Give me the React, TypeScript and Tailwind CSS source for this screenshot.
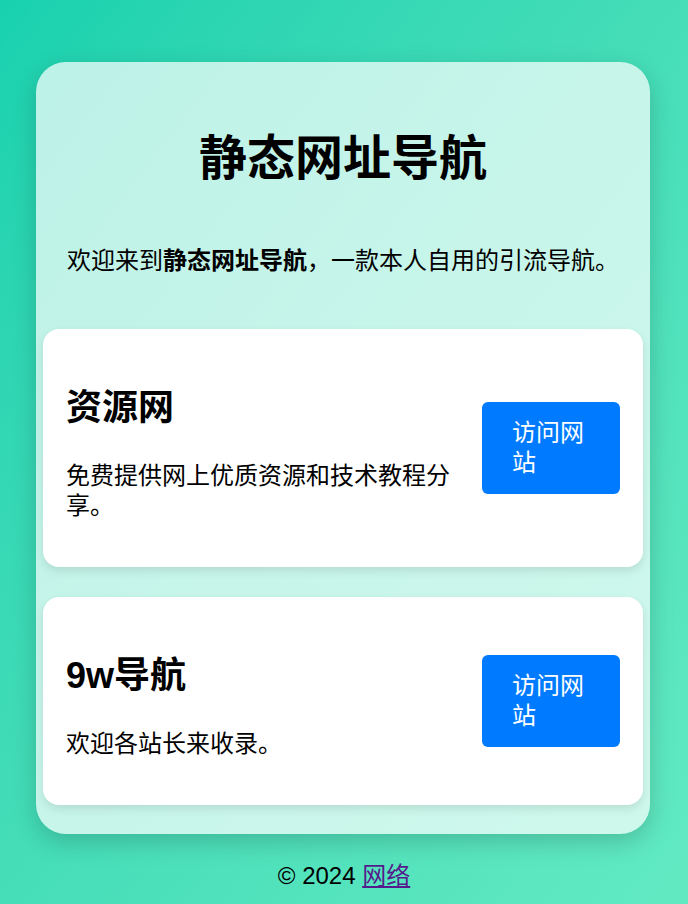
import React from "react";

const FONT = { fontFamily: '"Liberation Sans", "Noto Sans CJK SC", sans-serif' };

function Card({ title, desc }: { title: string; desc: string }) {
  return (
    <div className="flex items-center justify-between rounded-[16px] bg-white px-[23px] py-[24px] shadow-[0_4px_10px_rgba(0,0,0,0.1)]">
      <div className="flex-1 pr-[24px]">
        <h2 className="mt-[33px] text-[36px] font-bold leading-[43px] text-black">{title}</h2>
        <p className="mb-[22px] mt-[32px] text-[24px] leading-[30px] text-black">{desc}</p>
      </div>
      <a
        href="#"
        className="w-[138px] shrink-0 rounded-[6px] bg-[#007bff] px-[30px] py-[16px] text-[24px] leading-[30px] text-white"
      >
        访问网站
      </a>
    </div>
  );
}

export default function App() {
  return (
    <div
      className="min-h-screen w-full bg-linear-to-br from-[#17d1af] to-[#62eac2] pt-[62px] pb-[14px]"
      style={FONT}
    >
      <div className="ml-[36px] w-[614px] rounded-[30px] bg-white/70 px-[7px] pb-[29px] pt-[68px] shadow-[0_8px_24px_rgba(0,0,0,0.18)]">
        <h1 className="text-center text-[48px] font-bold leading-[58px] text-black">静态网址导航</h1>
        <p className="mt-[58px] px-[24px] text-[24px] leading-[30px] text-black">
          欢迎来到<strong className="font-bold">静态网址导航</strong>，一款本人自用的引流导航。
        </p>
        <div className="mt-[53px] flex flex-col gap-[30px]">
          <Card title="资源网" desc="免费提供网上优质资源和技术教程分享。" />
          <Card title="9w导航" desc="欢迎各站长来收录。" />
        </div>
      </div>
      <footer className="mt-[27px] text-center text-[24px] leading-[30px] text-black">
        © 2024 <a href="#" className="text-[#551a8b] underline">网络</a>
      </footer>
    </div>
  );
}
